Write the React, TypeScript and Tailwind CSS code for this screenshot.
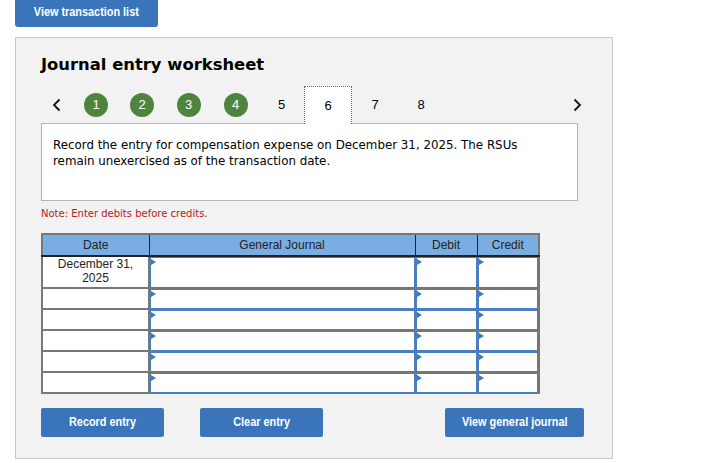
const navItems = [
  { label: "1", done: true, w: "w-[46px]" },
  { label: "2", done: true, w: "w-[46px]" },
  { label: "3", done: true, w: "w-[47px]" },
  { label: "4", done: true, w: "w-[47px]" },
  { label: "5", done: false, w: "w-[45px]" },
];

const rows = [
  { date: "December 31,\n2025", tall: true },
  { date: "", tall: false },
  { date: "", tall: false },
  { date: "", tall: false },
  { date: "", tall: false },
  { date: "", tall: false },
];

function InputCell() {
  return (
    <div className="relative h-full w-full border border-[#4a7dbf] bg-white">
      <span className="absolute left-0 top-[1px] h-0 w-0 border-y-[3px] border-l-[5px] border-y-transparent border-l-[#3b78c2]" />
    </div>
  );
}

function BlueButton({ label, className }: { label: string; className: string }) {
  return (
    <button className={`h-[29px] rounded-[2px] bg-[#3a75bb] text-[12.5px] font-bold text-white ${className}`}>
      <span className="inline-block scale-x-[0.87] whitespace-nowrap">{label}</span>
    </button>
  );
}

export default function App() {
  return (
    <div className="relative h-[463px] w-[706px] overflow-hidden bg-white font-['Liberation_Sans',Arial,sans-serif]">
      <button className="ml-[15px] block h-[27px] w-[143px] rounded-b-[3px] bg-[#3a75bb] pb-[2px] text-[12.5px] font-bold text-white">
        <span className="inline-block scale-x-[0.87] whitespace-nowrap">View transaction list</span>
      </button>

      <div className="ml-[15px] mt-[10px] h-[422px] w-[598px] border border-[#c8c8c8] bg-[#f2f2f2] pl-[25px]">
        <h1 className="mt-[17px] text-[16.4px] font-bold leading-[20px] text-black font-['DejaVu_Sans',Verdana,sans-serif]">
          Journal entry worksheet
        </h1>

        {/* step navigation */}
        <div className="mt-[11px] flex h-[38px] items-center text-[12px] text-black">
          <div className="flex w-[32px] justify-center">
            <svg width="10" height="14" viewBox="0 0 10 14">
              <path d="M7.5 1.5 L2 7 L7.5 12.5" fill="none" stroke="#111" strokeWidth="1.8" />
            </svg>
          </div>
          {navItems.map((item) => (
            <div key={item.label} className={`flex justify-center ${item.w}`}>
              {item.done ? (
                <span className="flex h-[24px] w-[24px] items-center justify-center rounded-full bg-[#4f843f] text-[13px] text-white">
                  {item.label}
                </span>
              ) : (
                <span className="text-[13px]">{item.label}</span>
              )}
            </div>
          ))}
          <div className="relative z-10 flex h-[38px] w-[48px] items-center justify-center border-x border-t border-dotted border-[#3b6fb0] bg-white text-[13px]">
            6
          </div>
          <div className="flex w-[46px] justify-center text-[13px]">7</div>
          <div className="flex w-[46px] justify-center text-[13px]">8</div>
          <div className="ml-auto mr-[30px] flex w-[10px] justify-center">
            <svg width="10" height="14" viewBox="0 0 10 14">
              <path d="M2.5 1.5 L8 7 L2.5 12.5" fill="none" stroke="#111" strokeWidth="1.8" />
            </svg>
          </div>
        </div>

        <div className="-mt-[1px] h-[78px] w-[537px] border border-[#b4b4b4] bg-white px-[11px] pt-[13px] text-[11.85px] leading-[16px] text-black font-['DejaVu_Sans',Verdana,sans-serif]">
          Record the entry for compensation expense on December 31, 2025. The RSUs
          <br />
          remain unexercised as of the transaction date.
        </div>

        <p className="mt-[7px] text-[10px] leading-[12px] text-[#b52020] font-['DejaVu_Sans',Verdana,sans-serif]">
          Note: Enter debits before credits.
        </p>

        <table className="mt-[13px] w-[497px] table-fixed border-collapse text-[12px] text-[#222]">
          <colgroup>
            <col className="w-[107px]" />
            <col className="w-[266px]" />
            <col className="w-[62px]" />
            <col className="w-[62px]" />
          </colgroup>
          <thead>
            <tr className="h-[22px] bg-[#7aaee3]">
              <th className="border-2 border-b-2 border-r border-[#777] border-b-[#222] border-r-[#222] font-normal">Date</th>
              <th className="border-t-2 border-b-2 border-r border-[#777] border-b-[#222] border-r-[#222] font-normal">General Journal</th>
              <th className="border-t-2 border-b-2 border-r border-[#777] border-b-[#222] border-r-[#222] font-normal">Debit</th>
              <th className="border-t-2 border-b-2 border-r-2 border-[#777] border-b-[#222] font-normal">Credit</th>
            </tr>
          </thead>
          <tbody>
            {rows.map((row, i) => (
              <tr key={i} className={row.tall ? "h-[32px]" : "h-[21px]"}>
                <td className="whitespace-pre-line border-x-2 border-b-2 border-[#777] bg-white p-0 text-center align-top leading-[14px]">
                  {row.date}
                </td>
                <td className="h-[inherit] border border-[#777] p-0">
                  <InputCell />
                </td>
                <td className="h-[inherit] border border-[#777] p-0">
                  <InputCell />
                </td>
                <td className="h-[inherit] border border-r-2 border-[#777] p-0">
                  <InputCell />
                </td>
              </tr>
            ))}
          </tbody>
        </table>

        <div className="mt-[14px] flex w-[543px] items-center">
          <BlueButton label="Record entry" className="w-[123px]" />
          <BlueButton label="Clear entry" className="ml-[36px] w-[123px]" />
          <BlueButton label="View general journal" className="ml-auto w-[139px]" />
        </div>
      </div>
    </div>
  );
}
